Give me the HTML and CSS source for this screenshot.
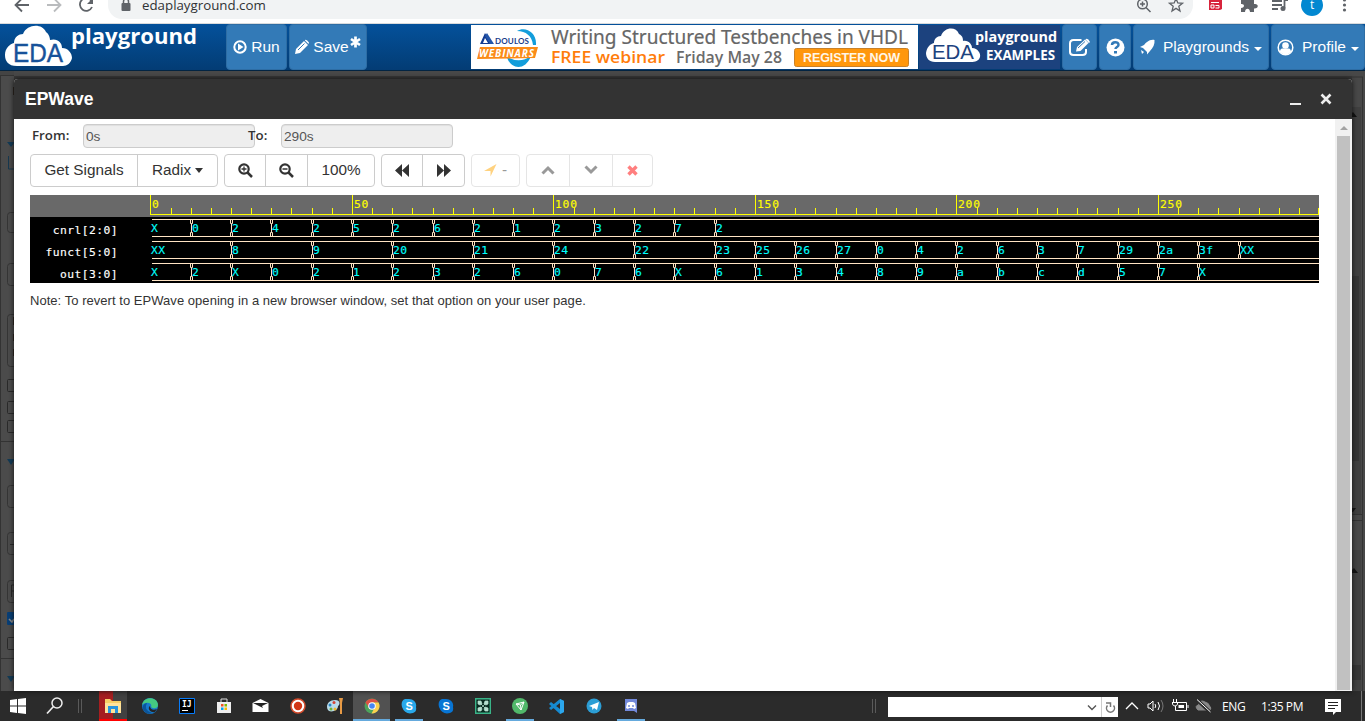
FILE: index.html
```html
<!DOCTYPE html>
<html lang="en">
<head>
<meta charset="utf-8">
<title>EPWave - EDA Playground</title>
<link rel="stylesheet" href="styles.css">
</head>
<body>
<header class="browser">
  <svg class="browser-nav" width="108" height="23" fill="none" stroke-width="1.8">
    <path d="M29 5H16M22 -1.500L15.500 5L22 11.500" stroke="#5f6368"/>
    <path d="M47 5H60M54 -1.500L60.500 5L54 11.500" stroke="#babcbe"/>
    <path d="M91.500 1A6.300 6.300 0 1 0 92 7" stroke="#5f6368"/><path d="M93 -2V4H87Z" fill="#5f6368"/>
  </svg>
  <div class="omnibox">
    <svg class="lock" width="10" height="14"><path d="M2.500 6V3.500a2.500 2.500 0 0 1 5 0V6" fill="none" stroke="#5f6368" stroke-width="1.500"/><rect x=".5" y="5" width="9" height="8" rx="1" fill="#5f6368"/></svg>
    <span class="url">edaplayground.com</span>
    <svg class="omni-icons" width="59" height="23" fill="none" stroke="#5f6368" stroke-width="1.500">
      <circle cx="8.500" cy="4" r="4.800"/><path d="M12 7.500L16.500 12M6 4H11M8.500 1.500V6.500"/>
      <path d="M42 -1.500L43.800 3L48.500 3.300L44.800 6.300L46 11L42 8.400L38 11L39.200 6.300L35.500 3.300L40.200 3Z" stroke-width="1.300"/>
    </svg>
  </div>
  <svg class="extensions" width="172" height="23">
    <path d="M16 0L27 -1L29 0V9L27 10H16Z" fill="#d8243c"/><path d="M18 2.500H26M18 5H21V8H18ZM22.500 5.500H26V8H22.500" fill="none" stroke="#fff"/>
    <path d="M48 0H53C52 -5 59 -5 58 0H61V4C66 3 66 9 61 8.500V12H57C57 7.500 52 7.500 52 12H48V8C52 8 52 3.500 48 4Z" fill="#5f6368"/>
    <path d="M79 1H89M79 5H89M79 9H85M91.500 8V0H95" fill="none" stroke="#5f6368" stroke-width="1.800"/><circle cx="90" cy="8.500" r="2.500" fill="#5f6368"/>
    <circle cx="119" cy="5" r="11" fill="#0288d1"/><text x="117" y="9" class="avatar">t</text>
    <g fill="#5f6368"><circle cx="151.500" cy="0" r="1.600"/><circle cx="151.500" cy="5" r="1.600"/><circle cx="151.500" cy="10" r="1.600"/></g>
  </svg>
</header>
<nav class="topnav">
  <svg class="brand" width="226" height="46">
    <path d="M17 42C8 42 5 37 5 31C5 24 10 20 14 19C14 13 19 10 23 10C27 0 42 -1 46 8C49 10 50 14 50 16C57 14 62 18 62 24C68 24 72 29 72 34C71 39 67 42 63 42Z" fill="#fff"/>
    <text x="13" y="38" class="brand-eda" textLength="50" lengthAdjust="spacingAndGlyphs">EDA</text><text x="71" y="20" class="brand-name" textLength="126" lengthAdjust="spacingAndGlyphs">playground</text>
  </svg>
  <button class="nav-btn run"><svg width="14" height="16"><circle cx="7" cy="8" r="5.700" fill="none" stroke="#fff" stroke-width="2"/><path d="M5 4.500L10.500 8L5 11.500Z" fill="#fff"/></svg><span>Run</span></button>
  <button class="nav-btn save"><svg width="14" height="16"><path d="M0 15L1 10L9 2L13 6L5 14ZM10 1Q11.500 0 14 3.500L13.500 5L10 1.500Z" fill="#fff"/><path d="M3 11L9.500 4.500" stroke="#337ab7"/></svg><span>Save</span><svg class="dirty" width="11" height="12"><path d="M5.500 .5V11.500M1 3L10 9M10 3L1 9" stroke="#fff" stroke-width="2.700"/></svg></button>
  <svg class="banner" width="448" height="44">
    <path fill="#fff" d="M0 0H447V44H0Z"/>
    <path d="M46 6C54 1 66 7 65 20H62C61 11 55 6 46 6ZM36 32Q49 39 60 31C54 47 39 44 36 32Z" fill="#129ddb"/>
    <path d="M14 8L21 19H9ZM14 13L12 18H17Z" fill="#123b91" fill-rule="evenodd"/><path d="M16 8L23 19H19L14 11Z" fill="#2356aa"/>
    <text x="24" y="19" class="doulos" textLength="34">DOULOS</text>
    <path d="M9 22H67L64 33L6 34Z" fill="#fb8b18"/><text x="8" y="32" class="webinars" textLength="55">WEBINARS</text>
    <text x="80" y="18.500" class="ad-title" textLength="357" lengthAdjust="spacingAndGlyphs">Writing Structured Testbenches in VHDL</text>
    <text x="80" y="38" class="ad-free" textLength="114" lengthAdjust="spacingAndGlyphs">FREE webinar</text>
    <text x="205" y="38" class="ad-date" textLength="106" lengthAdjust="spacingAndGlyphs">Friday May 28</text>
    <rect x="323.500" y="23.500" width="114" height="18" rx="2" fill="#ff970c" stroke="#c98128"/><text x="332" y="37" class="ad-cta" textLength="97">REGISTER NOW</text>
  </svg>
  <svg class="examples" width="141" height="44">
    <path fill="#1c427e" d="M0 0H141V44H0Z"/>
    <path d="M16 37C10 37 7 33 7 28C8 22 11 19 15 18C15 14 18 11 22 11C25 2 37 1 40 9C44 11 44 14 44 16C50 15 53 20 53 23C59 23 62 29 61 32C60 36 56 37 52 37Z" fill="#fff"/>
    <text x="13" y="34" class="ex-eda" textLength="42" lengthAdjust="spacingAndGlyphs">EDA</text><text x="56" y="17" class="ex-name" textLength="82" lengthAdjust="spacingAndGlyphs">playground</text><text x="67" y="35" class="ex-sub" textLength="69" lengthAdjust="spacingAndGlyphs">EXAMPLES</text>
  </svg>
  <button class="nav-btn edit"><svg width="21" height="19"><path d="M12.500 2H4.500Q1 2 1 5.500V14Q1 17 4.500 17H13.500Q17 17 17 14V11" fill="none" stroke="#fff" stroke-width="2"/><path d="M7 13.500L8 9L16 1.500L19.500 5L11.500 13ZM17 1Q19 0 21 4L20 5L16.500 1.500Z" fill="#fff"/><path d="M9 10L16 3.500" stroke="#337ab7"/></svg></button>
  <button class="nav-btn help"><svg width="19" height="19"><circle cx="9.500" cy="9.500" r="9" fill="#fff"/><path d="M6 7C6 3.500 12.500 3 12.500 7C12.500 9 9.500 9 9.500 11" fill="none" stroke="#337ab7" stroke-width="2.500"/><path fill="#337ab7" d="M8 13H11V15.500H8Z"/></svg></button>
  <button class="nav-btn playgrounds"><svg width="15" height="16"><path d="M14.500 1C9 0 6 4 4 6L0 8L3 9L7 13V15.500L10 12C13 9 15 5 14.500 1ZM1 11L4 13L2 15Z" fill="#fff"/></svg><span>Playgrounds</span><i class="caret"></i></button>
  <button class="nav-btn profile"><svg width="17" height="17"><circle cx="8.500" cy="8.500" r="7.300" fill="none" stroke="#fff" stroke-width="1.500"/><circle cx="8.500" cy="6.500" r="3.300" fill="#fff"/><path d="M3 13C3 8.500 6 9.500 8.500 9.500S14 8.500 14 13Q8.500 18 3 13Z" fill="#fff"/></svg><span>Profile</span><i class="caret"></i></button>
</nav>
<main class="workspace">
  <svg class="page-left" width="14" height="620">
    <path fill="#444" d="M0 0H14V620H0Z"/><path fill="#4b4b4b" d="M1 5H14V620H1Z"/><path d="M.5 5V620M0 4.500H14M1 370.500H14M1 587.500H14" stroke="#333"/>
    <path d="M7 71H15L11 76ZM7 388H15L11 394ZM7 605H15L11 611Z" fill="#123a55"/><path d="M8.500 85V98H14" fill="none" stroke="#17384f"/>
    <g fill="none" stroke="#343434"><rect x="7.500" y="141.500" width="18" height="20" rx="3"/><rect x="7.500" y="192.500" width="18" height="22" rx="3"/><rect x="7.500" y="243.500" width="18" height="52" rx="3"/><rect x="7.500" y="414.500" width="18" height="22" rx="3"/><rect x="7.500" y="461.500" width="18" height="22" rx="3"/><rect x="7.500" y="509.500" width="18" height="22" rx="3"/></g>
    <g fill="none" stroke="#292929"><rect x="7.500" y="308.500" width="12" height="12" rx="1"/><rect x="7.500" y="330.500" width="12" height="12" rx="1"/><rect x="7.500" y="349.500" width="12" height="12" rx="1"/><rect x="7.500" y="566.500" width="12" height="12" rx="1"/><path d="M10 473.500H14M11.500 526V514H14M11.500 520H14"/></g>
    <rect x="7" y="541" width="13" height="13" rx="1" fill="#083e75"/><path d="M9 548L12 551L14 548" stroke="#888" stroke-width="1.500" fill="none"/><path d="M13.500 16V24M13.500 246V254M13.500 263V270M13.500 278V285" stroke="#2b211b"/>
  </svg>
  <section class="dialog">
    <header class="dialog-head"><h1>EPWave</h1><svg width="45" height="20"><path d="M0 15H11" stroke="#eee" stroke-width="2.200"/><path d="M31.500 5.500L40.500 14.500M40.500 5.500L31.500 14.500" stroke="#eee" stroke-width="2.600"/></svg></header>
    <div class="dialog-body">
      <div class="content">
        <div class="range"><label>From:</label><input class="from-input" value="0s" readonly><label class="to-label">To:</label><input class="to-input" value="290s" readonly></div>
        <div class="toolbar">
          <div class="group"><button class="signals">Get Signals</button><button class="radix">Radix<i class="caret"></i></button></div>
          <div class="group zooms"><button><svg width="15" height="15"><circle cx="6" cy="6" r="4.700" fill="none" stroke="#333" stroke-width="2.200"/><path d="M9.500 9.500L14 14" stroke="#333" stroke-width="2.500"/><path d="M3.500 6H8.500M6 3.500V8.500" stroke="#333" stroke-width="1.300"/></svg></button><button><svg width="15" height="15"><circle cx="6" cy="6" r="4.700" fill="none" stroke="#333" stroke-width="2.200"/><path d="M9.500 9.500L14 14" stroke="#333" stroke-width="2.500"/><path d="M3.500 6H8.500" stroke="#333" stroke-width="1.300"/></svg></button><button class="percent">100%</button></div>
          <div class="group steps"><button><svg width="15" height="13"><path d="M7 0V13L0 6.500ZM14 0V13L7 6.500Z" fill="#333"/></svg></button><button><svg width="15" height="13"><path d="M1 0L8 6.500L1 13ZM8 0L15 6.500L8 13Z" fill="#333"/></svg></button></div>
          <div class="group locate"><button><svg width="13" height="13"><path d="M12.500 0L6.500 12.500V7H0Z" fill="#ffd27f"/></svg><span>-</span></button></div>
          <div class="group edits"><button><svg width="14" height="10"><path d="M1.500 8.500L7 3L12.500 8.500" fill="none" stroke="#999" stroke-width="3"/></svg></button><button><svg width="14" height="10"><path d="M1.500 1.500L7 7L12.500 1.500" fill="none" stroke="#999" stroke-width="3"/></svg></button><button><svg width="11" height="11"><path d="M1.500 1.500L9.500 9.500M9.500 1.500L1.500 9.500" stroke="#ff7f7f" stroke-width="3.400"/></svg></button></div>
        </div>
        <svg class="wave" id="wave" width="1289" height="88"></svg>
        <p class="note">Note: To revert to EPWave opening in a new browser window, set that option on your user page.</p>
      </div>
      <div class="scrollbar"><i class="scroll-up"></i><div class="thumb"></div></div>
    </div>
  </section>
  <svg class="page-right" width="13" height="620"><path fill="#484848" d="M0 0H13V620H0Z"/><path fill="#3f3f3f" d="M0 36H9V444H0Z"/><path fill="#353535" d="M0 205H7V390H0Z"/><path d="M10.500 6V620M0 443.500H11M0 449.500H11M0 6H11" stroke="#333"/><path fill="#414141" d="M0 479H9V620H0Z"/><path d="M0 42L1 41L5 46H0ZM0 499L2 497L6 502H0ZM0 437H4L1 441H0Z" fill="#111"/><path fill="#353535" d="M0 594H9V609H0Z"/></svg>
</main>
<footer class="taskbar">
  <div class="start">
    <svg width="17" height="16" class="win"><path d="M0 2L7 1V7.500H0ZM8 1L16 0V7.500H8ZM0 8.500H7V15L0 14ZM8 8.500H16V16L8 15Z" fill="#fff"/></svg>
    <svg width="18" height="18" class="find"><circle cx="11" cy="6" r="5" fill="none" stroke="#eee" stroke-width="1.500"/><path d="M7.500 9.500L1 16.500" stroke="#eee" stroke-width="1.700"/></svg>
    <i class="bars"></i>
  </div>
  <div class="apps">
    <div class="app explorer"><svg width="18" height="18"><path d="M1 2H6L8 4H17V16H1Z" fill="#f7cf66"/><path d="M1 6H17V16H1Z" fill="#ffe39a"/><path d="M4 16V9H14V16H11V12H7V16Z" fill="#2894dc"/></svg></div>
    <div class="app"><svg width="18" height="18"><circle cx="9" cy="9" r="8" fill="#167bce"/><path d="M1 8C3 -2 17 0 17 8C17 12 12 12 10 10C12 6 5 4 1 8Z" fill="#45ca82"/><path d="M6 6Q2 13 11 16Q6 18 3 14C0 10 3 6 6 6Z" fill="#0c5599"/><path d="M9 9C9 12 12 14 16 12L14 15C9 16 6 11 9 9Z" fill="#262626"/></svg></div>
    <div class="app"><svg width="16" height="16"><path d="M.5 .5H15.500V15.500H.5Z" fill="#000" stroke="#087cfa"/><text x="3" y="9" class="ij">IJ</text><path d="M3 12.500H9" stroke="#fff"/></svg></div>
    <div class="app"><svg width="16" height="16"><path d="M5 5V1H11V5" fill="none" stroke="#ddd"/><path d="M1 4H15V15H1Z" fill="#eee"/><path fill="#f25022" d="M5 6H7.500V8.500H5Z"/><path fill="#7fba00" d="M8.500 6H11V8.500H8.500Z"/><path fill="#00a4ef" d="M5 9.500H7.500V12H5Z"/><path fill="#ffb900" d="M8.500 9.500H11V12H8.500Z"/></svg></div>
    <div class="app"><svg width="17" height="16"><path d="M.5 5L8.500 1L16.500 5V14H.5Z" fill="#fff"/><path d="M1 5H16L10 8L11 10L8 8.500Z" fill="#222"/></svg></div>
    <div class="app"><svg width="16" height="16"><circle cx="8" cy="8" r="7" fill="#fff" stroke="#d54b2b" stroke-width="1.500"/><circle cx="8" cy="8" r="4.200" fill="#d23716"/></svg></div>
    <div class="app"><svg width="18" height="18"><path d="M9 3C15 3 14 8 12 9C12 15 1 17 1 10C1 6 4 3 9 3Z" fill="#b9dbea"/><circle cx="4" cy="8" r="1.500" fill="#2685c6"/><circle cx="8" cy="5.500" r="1.500" fill="#d84435"/><circle cx="5" cy="12" r="1.500" fill="#6bb23b"/><circle cx="9" cy="12" r="1.500" fill="#efb72e"/><path d="M13 1H17L16 6V17H14V6Z" fill="#e79a45"/></svg></div>
    <div class="app active chrome"><svg width="16" height="16"><circle cx="8" cy="8" r="7.500" fill="#4da35b"/><path d="M1.500 4.500A7.500 7.500 0 0 1 14.500 4.500H8L5 10Z" fill="#dd5145"/><path d="M8 4.500H14.600A7.500 7.500 0 0 1 7.500 15.500L11 9Z" fill="#fdd14e"/><circle cx="8" cy="8" r="3.800" fill="#fff"/><circle cx="8" cy="8" r="2.800" fill="#4687f4"/></svg></div>
    <div class="app open"><svg width="16" height="16"><path d="M4 1C6 1 6 1 8 1C13 1 16 5 15 9Q16 14 12 15Q4 17 1 9C0 5 1 2 4 1Z" fill="#28a8ea"/><text x="4.500" y="12" class="skype">S</text></svg></div>
    <div class="app"><svg width="16" height="16"><path d="M4 1C6 1 6 1 8 1C13 1 16 5 15 9Q16 14 12 15Q4 17 1 9C0 5 1 2 4 1Z" fill="#0875d4"/><text x="4.500" y="12" class="skype">S</text></svg></div>
    <div class="app"><svg width="16" height="16"><path d="M.7 .7H15.300V15.300H.7Z" fill="#082a20" stroke="#3ab488" stroke-width="1.400"/><path d="M3 3H6L7 6L5 7L3 6ZM13 3H10L9 6L11 7L13 6ZM3 13V10L6 9L7 11L6 13ZM13 13V10L10 9L9 11L10 13ZM6 6L10 10M10 6L6 10" stroke="#b5dfcf" fill="#b5dfcf" stroke-width=".7"/></svg></div>
    <div class="app open"><svg width="16" height="16"><circle cx="8" cy="8" r="8" fill="#51b86a"/><path d="M4 6L12 4L9 12ZM4 6L8.500 7L9 12M8.500 7L12 4" fill="none" stroke="#fff"/></svg></div>
    <div class="app"><svg width="17" height="17"><path d="M12 1L16 3V14L12 16L1 6L3 4L12 11V5L3 12L1 10Z" fill="#168bd2"/><path d="M12 1L16 3V14L12 16Z" fill="#2ca7ed"/></svg></div>
    <div class="app"><svg width="16" height="16"><circle cx="8" cy="8" r="7.500" fill="#2c9ed5"/><path d="M3 8L13 4L11 12L8 10L6.500 12L6 9Z" fill="#fff"/></svg></div>
    <div class="app open"><svg width="14" height="16"><path d="M1 1H13V15L10 13H1Z" fill="#7289da"/><path d="M3 5L5 4H9L11 5L12 10L10 11L9 10H5L4 11L2 10Z" fill="#fff"/><path d="M5 7V9M9 7V9" stroke="#7289da" stroke-width="1.500"/></svg></div>
  </div>
  <div class="tray">
    <i class="bars"></i>
    <div class="address"><svg width="31" height="20" fill="none"><path d="M1 8.500L5 12.500L9 8.500" stroke="#555" stroke-width="1.400"/><path d="M14.500 0V20" stroke="#ccc"/><path d="M20.500 8.500A4 4 0 1 0 26.500 8.500M19 6H23.500V10" stroke="#777" stroke-width="1.500"/></svg></div>
    <svg class="status" width="100" height="30" fill="none" stroke="#fff">
      <path d="M8 18L14 12L20 18" stroke-width="1.300"/><path d="M30 13H32L35 10V20L32 17H30ZM37 13Q38.500 15 37 17M40 11Q43 15 40 19"/><path d="M43 9Q47 15 43 21" stroke="#777"/>
      <path d="M60 11.500H68.500V19.500H57.500V17M70 14V17M55.500 8V11M58.500 8V11M54 11.500H60M54.500 11.500V13Q55 15 57 15T59.500 13V11.500M57.500 15V19"/><path d="M60.500 14H66V17H60.500Z" fill="#fff" stroke="none"/>
      <path d="M80 19Q76 15 80.500 14Q82 8 87 11Q91 12 91.500 15Q94 17 92 19Z" fill="#888" stroke="#888"/><path d="M78.500 8.500L92 21" stroke="#2b2b2b" stroke-width="3.500"/><path d="M79 8.500L92.500 21"/>
    </svg>
    <span class="lang">ENG</span><span class="clock">1:35 PM</span>
    <svg class="action" width="16" height="17"><path d="M0 1H16V14H11L8 17V14H0Z" fill="#fff"/><path d="M3 4.500H13M3 7.500H13M3 10.500H10" stroke="#222"/></svg>
  </div>
</footer>
<script src="wave.js"></script>
</body>
</html>
```

FILE: styles.css
```css
* { box-sizing: border-box; }
body { margin: 0; width: 1365px; height: 721px; overflow: hidden; display: flex; flex-direction: column; font-family: "Liberation Sans", Arial, sans-serif; background: #484848; }
svg { display: block; flex: none; }
button { font: inherit; margin: 0; padding: 0; border: 0; background: none; }
.browser { height: 24px; flex: none; display: flex; background: #fff; border-bottom: 1px solid #d9dbdd; }
.omnibox { width: 1085px; height: 19px; background: #f1f3f4; border-radius: 0 0 14px 14px; display: flex; }
.lock { margin: -2px 11px 0 13px; }
.url { flex: 1; margin-top: -5px; line-height: 20px; font-family: "Open Sans", sans-serif; font-size: 13.3px; color: #303235; }
.avatar { font: 12px "Open Sans", sans-serif; fill: #fff; }
.topnav { height: 47px; flex: none; display: flex; background: linear-gradient(#04519b, #033c74); border-bottom: 1px solid #022442; }
.brand-eda { font: 26px "Liberation Sans", sans-serif; fill: #17529a; stroke: #17529a; stroke-width: .4px; }
.brand-name { font: bold 22px "Open Sans", sans-serif; fill: #fff; }
.nav-btn { height: 46px; flex: none; display: flex; align-items: center; justify-content: center; background: #337ab7; border: 1px solid #2e6da4; border-radius: 4px; color: #fff; font-size: 15.5px; gap: 4px; }
.run { width: 61px; margin-right: 2px; }
.save { width: 78px; margin-right: 104px; }
.dirty { margin: -10px 0 0 -3px; }
.banner { margin-top: 1px; }
.doulos { font: bold 8px Lato, sans-serif; fill: #173b8a; }
.webinars { font: italic bold 10px "Open Sans", sans-serif; fill: #fff; }
.ad-title { font: 19.5px "Noto Sans", sans-serif; fill: #666; stroke: #666; stroke-width: .2px; }
.ad-free { font: 600 16px "Open Sans", sans-serif; fill: #ff7d0b; }
.ad-date { font: 600 16px "Open Sans", sans-serif; fill: #6b6b6b; }
.ad-cta { font: bold 12.5px "Liberation Sans", sans-serif; fill: #fff6e8; }
.examples { margin: 1px 2px 0 0; }
.ex-eda { font: 21px "Liberation Sans", sans-serif; fill: #1c427e; }
.ex-name { font: bold 14px "Open Sans", sans-serif; fill: #fff; }
.ex-sub { font: bold 14px "Open Sans", sans-serif; fill: #fff; }
.edit { width: 35px; margin-right: 2px; }
.help { width: 32px; margin-right: 2px; }
.playgrounds { width: 136px; margin-right: 2px; gap: 8px; }
.profile { width: 94px; gap: 8px; }
.caret { flex: none; border: 4.500px solid transparent; border-top: 5px solid currentColor; border-bottom: 0; }
.nav-btn .caret { margin: 3px 0 0 -3px; border-width: 4px 4px 0; }
.workspace { height: 620px; flex: none; display: flex; background: linear-gradient(#484848 0 5px, #373737 5px); }
.dialog { width: 1338px; margin-top: 8px; display: flex; flex-direction: column; border-radius: 4px 4px 0 0; overflow: hidden; background: #fff; box-shadow: 0 0 5px #111; position: relative; }
.dialog-head { height: 40px; flex: none; background: #333; display: flex; align-items: center; justify-content: space-between; padding: 0 17px 0 11px; color: #fff; }
.dialog-head h1 { margin: 0; font-size: 17.5px; font-weight: bold; }
.dialog-body { flex: 1; display: flex; }
.content { width: 1321px; padding: 5px 0 0 16px; }
.range { height: 24px; display: flex; font-size: 14px; }
.range label { width: 53px; padding-left: 2px; font: 600 13.3px/23px "Open Sans", sans-serif; color: #333; }
.range input { height: 24px; padding: 1px 2px; border: 1px solid #ccc; border-radius: 4px; background: #eee; box-shadow: inset 0 1px 1px #0001; font: 13.7px "Liberation Sans", sans-serif; color: #555; }
.from-input { width: 172px; }
.range .to-label { width: 33px; margin-left: -7px; padding: 0; position: relative; }
.to-input { width: 172px; }
.toolbar { height: 33px; margin-top: 6px; display: flex; gap: 6px; font-size: 15.3px; color: #333; }
.group { display: flex; border: 1px solid #ccc; border-radius: 4px; }
.group button { display: flex; align-items: center; justify-content: center; color: inherit; padding-bottom: 1px; }
.group button + button { border-left: 1px solid #ccc; }
.signals { width: 106px; }
.radix { width: 80px; gap: 4px; }
.zooms button { width: 40px; }
.zooms button + button { width: 42px; }
.zooms .percent { width: 67px; }
.steps button { width: 40px; }
.steps button + button { width: 42px; }
.locate { border-color: #e5e5e5; }
.locate button { width: 47px; gap: 5px; color: #999; }
.edits { border-color: #e5e5e5; }
.edits button { width: 42px; }
.edits button + button { width: 43px; border-color: #e5e5e5; }
.edits button:last-child { width: 40px; }
.wave { margin-top: 8px; }
.wave text { font: 11.3px "DejaVu Sans Mono", monospace; letter-spacing: .45px; stroke-width: .15px; }
.wave .ruler-text { fill: #ff0; stroke: #ff0; letter-spacing: .8px; }
.wave .signal-name { fill: #fff; stroke: #fff; }
.wave .value { fill: #0ff; stroke: #0ff; }
.note { margin: 9px 0 0; font-size: 13px; line-height: 17px; color: #333; letter-spacing: .04px; }
.scrollbar { width: 17px; background: #f1f1f1; padding: 0 2px; }
.scroll-up { display: block; height: 17px; padding-top: 7px; }
.scroll-up::before { content: ""; display: block; width: 0; margin: 0 auto; border: 4px solid transparent; border-top: 0; border-bottom-color: #a3a3a3; }
.thumb { height: 554px; background: #c1c1c1; }
.taskbar { height: 30px; flex: none; display: flex; background: #2b2b2b; }
.start { width: 95px; display: flex; align-items: center; }
.win { margin: 0 19px 0 10px; }
.find { margin-right: 14px; }
.bars { width: 4px; height: 14px; border: solid #5a5a5a; border-width: 0 1px; }
.apps { display: flex; }
.app { width: 37px; height: 30px; display: flex; align-items: center; justify-content: center; }
.explorer { width: 28px; margin: 0 4px; background: linear-gradient(#f00 0 0) bottom / 100% 2px no-repeat, linear-gradient(90deg, #a51e20 50%, #414141 50%); }
.active { background: linear-gradient(#65aadd 0 0) bottom / 100% 2px no-repeat, #515151; }
.open { background: linear-gradient(#65aadd 0 0) bottom / 28px 2px no-repeat; }
.ij { font: bold 8px "DejaVu Sans Mono", monospace; fill: #fff; }
.skype { font: bold 11px "Liberation Sans", sans-serif; fill: #fff; }
.tray { flex: 1; display: flex; align-items: center; color: #fff; font: 12px "Open Sans", sans-serif; border-right: 1px solid #777; margin-right: 3px; padding-left: 223px; }
.address { width: 230px; height: 20px; margin: 2px 0 0 12px; background: #fff; display: flex; justify-content: flex-end; }
.lang { width: 39px; margin-left: 4px; white-space: nowrap; letter-spacing: -.3px; }
.clock { width: 64px; white-space: nowrap; letter-spacing: -.4px; }
```

FILE: wave.js
```javascript
const svg = document.getElementById("wave");
const origin = 121.4;
const unit = 4.03;
const at = time => Math.round(origin + time * unit);

function add(name, attributes, text) {
  const node = document.createElementNS("http://www.w3.org/2000/svg", name);
  for (const [key, value] of Object.entries(attributes)) node.setAttribute(key, value);
  if (text !== undefined) node.textContent = text;
  svg.append(node);
}

add("rect", { width: 1289, height: 88, fill: "#000" });
add("rect", { width: 1289, height: 22, fill: "#696969" });
let ticks = `M120 19.5H1289M120.500 0V20`;
for (let t = 0; t <= 290; t += 5) {
  const x = Math.min(at(t), 1289) - .5;
  ticks += `M${x} ${t % 50 ? 13 : 0}V20`;
}
add("path", { d: ticks, stroke: "#ff0", fill: "none" });
for (let t = 0; t < 290; t += 50) add("text", { x: at(t) + 1, y: 13, class: "ruler-text" }, t);

const signals = [
  ["cnrl[2:0]", [0,10,20,30,40,50,60,70,80,90,100,110,120,130,140], "X 0 2 4 2 5 2 6 2 1 2 3 2 7 2"],
  ["funct[5:0]", [0,20,40,60,80,100,120,140,150,160,170,180,190,200,210,220,230,240,250,260,270], "XX 8 9 20 21 24 22 23 25 26 27 0 4 2 6 3 7 29 2a 3f XX"],
  ["out[3:0]", [0,10,20,30,40,50,60,70,80,90,100,110,120,130,140,150,160,170,180,190,200,210,220,230,240,250,260], "X 2 X 0 2 1 2 3 2 6 0 7 6 X 6 1 3 4 8 9 a b c d 5 7 X"]
];
signals.forEach(([name, times, valueText], row) => {
  const top = 24.5 + row * 22;
  const bottom = top + 17;
  let line = `M122 ${top}H1289M122 ${bottom}H1289`;
  times.slice(1).forEach(t => {
    const x = at(t) + .5;
    add("rect", { x: x - 1, y: top - .5, width: 1, height: 18, fill: "#000" });
    line += `M${x - 2} ${top}V${top + 4}H${x - 1}V${bottom - 4}H${x - 2}V${bottom}M${x + 1} ${top}H${x}V${top + 4}H${x - 1}M${x + 1} ${bottom}H${x}V${bottom - 4}H${x - 1}`;
  });
  add("path", { d: line, stroke: "#ffe4c4", fill: "none" });
  add("text", { x: 88, y: 39 + row * 22, "text-anchor": "end", class: "signal-name" }, name);
  valueText.split(" ").forEach((value, i) => add("text", { x: at(times[i]), y: 37 + row * 22, class: "value" }, value));
});
```
